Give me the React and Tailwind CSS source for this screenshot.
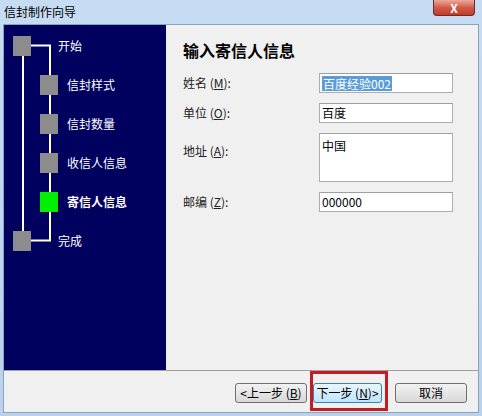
import React from 'react';

const FONT = { fontFamily: '"Noto Sans CJK SC", "Liberation Sans", sans-serif' };

const steps = [
  { text: '开始', level: 0 },
  { text: '信封样式', level: 1 },
  { text: '信封数量', level: 1 },
  { text: '收信人信息', level: 1 },
  { text: '寄信人信息', level: 1, current: true },
  { text: '完成', level: 0 },
];

const StepTree = () => (
  <div className="relative w-[162px] shrink-0 bg-[#00005f] pt-[1px]">
    {/* connector lines behind the step squares */}
    <svg className="absolute left-0 top-0" width="162" height="346">
      <g stroke="#ffffff" strokeWidth="2" fill="none">
        <line x1="19" y1="29" x2="19" y2="207" />
        <polyline points="27,20.5 46,20.5 46,215.5 27,215.5" />
      </g>
    </svg>
    {steps.map((s) => (
      <div key={s.text} className="relative flex h-[39px] items-center">
        {s.level === 0 ? (
          <div className="ml-[9px] h-[20px] w-[18px] bg-[#8c8c8c]" />
        ) : (
          <div className={`ml-[36px] h-[20px] w-[18px] ${s.current ? 'bg-[#00ee00]' : 'bg-[#8c8c8c]'}`} />
        )}
        <span
          className={`text-[12px] leading-none text-white ${s.level === 0 ? 'ml-[27px]' : 'ml-[9px]'} ${s.current ? 'font-bold' : ''}`}
        >
          {s.text}
        </span>
      </div>
    ))}
  </div>
);

const Label = ({ name, hotkey }) => (
  <span className="text-[12px] leading-none text-[#222]">
    {name} (<span className="underline">{hotkey}</span>):
  </span>
);

const Field = ({ children, tall }) => (
  <div
    className={`w-[134px] border border-[#abadb3] border-t-[#9aa0a8] bg-white px-[2px] text-[12px] text-black ${tall ? 'h-[49px] pt-[3px]' : 'flex h-[20px] items-center'}`}
  >
    {children}
  </div>
);

const Button = ({ children, focused }) => (
  <button
    className={`flex h-[20px] items-center justify-center rounded-[3px] border text-[12px] leading-none text-black ${
      focused
        ? 'w-[69px] border-[#3c7fb1] bg-gradient-to-b from-[#eaf6fd] to-[#bee6fd]'
        : 'w-[72px] border-[#707070] bg-gradient-to-b from-[#f2f2f2] to-[#d8d8d8]'
    }`}
  >
    {children}
  </button>
);

export default function App() {
  return (
    <div className="flex h-[416px] w-[482px] flex-col bg-gradient-to-b from-[#c6dcf2] to-[#b9d2ea]" style={FONT}>
      {/* title bar */}
      <div className="relative flex h-[24px] shrink-0 items-center pl-[4px]">
        <span className="text-[12px] leading-none text-black">信封制作向导</span>
        <div className="absolute right-[7px] top-0 flex h-[16px] w-[42px] items-center justify-center rounded-b-[4px] border border-t-0 border-[#6b2a24] bg-gradient-to-b from-[#e9a99c] via-[#d35a49] to-[#c23b2b]">
          <span className="text-[12px] font-bold leading-none text-white">X</span>
        </div>
      </div>

      {/* client area */}
      <div className="relative mx-[3px] flex h-[389px] flex-col border border-[#8aa3bf] bg-[#f0f0f0]">
        <div className="flex h-[345px]">
          <StepTree />
          <div className="flex-1 pl-[17px] pt-[15px]">
            <h1 className="h-[20px] text-[16px] font-bold leading-[20px] text-black">输入寄信人信息</h1>
            <div className="mt-[13px] grid grid-cols-[136px_134px] gap-y-[10px]">
              <div className="flex items-center"><Label name="姓名" hotkey="M" /></div>
              <Field>
                <span className="bg-[#5a9bd8] px-[1px] leading-[15px] text-white">百度经验002</span>
              </Field>
              <div className="flex items-center"><Label name="单位" hotkey="O" /></div>
              <Field>百度</Field>
              <div className="pt-[4px]"><Label name="地址" hotkey="A" /></div>
              <Field tall>中国</Field>
              <div className="flex items-center"><Label name="邮编" hotkey="Z" /></div>
              <Field>000000</Field>
            </div>
          </div>
        </div>

        {/* footer with navigation buttons */}
        <div className="relative flex flex-1 items-start border-t border-[#a0a0a0] pt-[12px] pl-[231px]">
          <Button>&lt;上一步 (<span className="underline">B</span>)</Button>
          <div className="ml-[6px]">
            <Button focused>下一步 (<span className="underline">N</span>)&gt;</Button>
          </div>
          <div className="ml-[13px]">
            <Button>取消</Button>
          </div>
          {/* red highlight frame */}
          <div className="pointer-events-none absolute left-[306px] top-0 h-[40px] w-[78px] border-[3px] border-[#c41c24]" />
        </div>
      </div>
    </div>
  );
}
